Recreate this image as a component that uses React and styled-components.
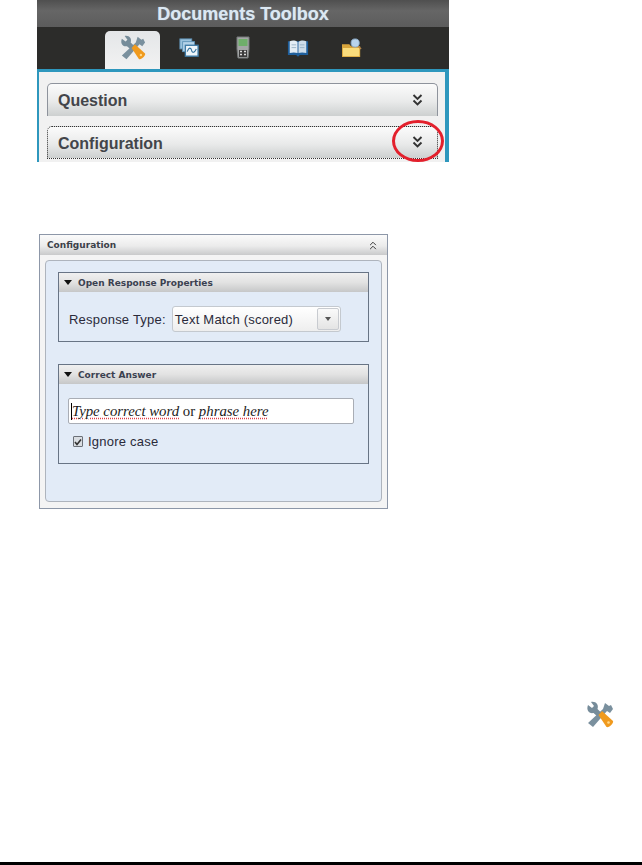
import React from "react";
import styled, { createGlobalStyle } from "styled-components";

const GlobalStyle = createGlobalStyle`
  html, body {
    margin: 0;
    padding: 0;
    background: #ffffff;
  }
  * {
    box-sizing: border-box;
  }
`;

const Page = styled.div`
  width: 642px;
  height: 865px;
  display: flex;
  flex-direction: column;
  font-family: "Liberation Sans", Arial, sans-serif;
  border-bottom: 3px solid #000000;
`;

// top screenshot
const Toolbox = styled.section`
  position: relative;
  width: 412px;
  height: 162px;
  margin-left: 37px;
  display: flex;
  flex-direction: column;
  overflow: hidden;
`;

const TitleBar = styled.div`
  height: 27px;
  flex: none;
  display: flex;
  align-items: center;
  justify-content: center;
  padding-top: 2px;
  background: linear-gradient(#4f4f4f, #666666 40%, #5c5c5c);
  color: #dce8f2;
  font-size: 18px;
  font-weight: bold;
  text-shadow: 0 0 1px #9fb8cc;
`;

const TabStrip = styled.div`
  height: 45px;
  flex: none;
  display: flex;
  align-items: flex-end;
  padding-left: 68px;
  background: #2c2c2a;
  border-bottom: 3px solid #2e97bd;
`;

const Tab = styled.div`
  width: ${(p) => p.$width || 45}px;
  height: 38px;
  display: flex;
  align-items: center;
  justify-content: center;
  padding-bottom: 4px;
  border-radius: 5px 5px 0 0;
  background: ${(p) => (p.$active ? "linear-gradient(#e4e6e8, #f2f2f2)" : "transparent")};
`;

const ToolboxBody = styled.div`
  flex: 1;
  display: flex;
  flex-direction: column;
  gap: 10px;
  padding: 11px 7px 0 8px;
  background: #f1f1f1;
  border-left: 2px solid #2e97bd;
  border-right: 4px solid #2e97bd;
`;

const Accordion = styled.div`
  height: 33px;
  flex: none;
  display: flex;
  align-items: center;
  justify-content: space-between;
  padding: 2px 14px 0 10px;
  border: 1px ${(p) => (p.$focused ? "dotted #333333" : "solid #8e939c")};
  border-bottom: ${(p) => (p.$focused ? "1px dotted #333333" : "none")};
  border-radius: 5px 5px 0 0;
  background: linear-gradient(#fbfbfb, #e9eaea 55%, #cdd0d0);
  color: #43454a;
  font-size: 16px;
  font-weight: bold;
`;

const ChevronSlot = styled.span`
  display: flex;
  margin-bottom: 3px;
`;

const Annotation = styled.div`
  position: absolute;
  left: 355px;
  top: 120px;
  width: 52px;
  height: 42px;
  border: 3px solid #e3202c;
  border-radius: 50%;
`;

// configuration dialog
const Dialog = styled.section`
  width: 349px;
  height: 275px;
  margin: 72px 0 0 39px;
  display: flex;
  flex-direction: column;
  border: 1px solid #8d97a8;
  background: #f4f4f4;
`;

const DialogHeader = styled.div`
  height: 20px;
  flex: none;
  display: flex;
  align-items: center;
  justify-content: space-between;
  padding: 0 10px 0 7px;
  background: linear-gradient(#fbfbfb, #ebebeb 55%, #c9cacb);
  color: #3c4048;
  font-family: "DejaVu Sans", sans-serif;
  font-size: 9px;
  font-weight: bold;
`;

const DialogBody = styled.div`
  flex: 1;
  display: flex;
  flex-direction: column;
  gap: 22px;
  margin: 5px 5px 6px 5px;
  padding: 11px 12px 0 12px;
  border: 1px solid #aeb4bd;
  border-radius: 4px;
  background: #e2ebf7;
`;

const Group = styled.div`
  height: ${(p) => p.$height}px;
  flex: none;
  display: flex;
  flex-direction: column;
  border: 1px solid #687485;
`;

const GroupHeader = styled.div`
  height: 19px;
  flex: none;
  display: flex;
  align-items: center;
  gap: 6px;
  padding-left: 5px;
  background: linear-gradient(#f0f0f0, #e2e2e2 50%, #c6c7c8);
  color: #3b4150;
  font-family: "DejaVu Sans", sans-serif;
  font-size: 9px;
  font-weight: bold;
`;

const Triangle = styled.span`
  width: 0;
  height: 0;
  border-left: 4.5px solid transparent;
  border-right: 4.5px solid transparent;
  border-top: 5px solid #111111;
`;

const FieldRow = styled.div`
  display: flex;
  align-items: center;
  gap: 6px;
  padding: 14px 0 0 10px;
  color: #2a2a3a;
  font-size: 13px;
  letter-spacing: 0.22px;
`;

const Select = styled.div`
  width: 169px;
  height: 26px;
  display: flex;
  align-items: center;
  justify-content: space-between;
  padding: 0 1px 0 2px;
  border: 1px solid #c4c9cf;
  border-radius: 3px;
  background: linear-gradient(#ffffff, #eeeeee);
`;

const SelectArrow = styled.span`
  width: 22px;
  height: 22px;
  display: flex;
  align-items: center;
  justify-content: center;
  border: 1px solid #c8cbd0;
  border-radius: 2px;
  background: linear-gradient(#fafafa, #e4e4e4);

  &::after {
    content: "";
    border-left: 3.5px solid transparent;
    border-right: 3.5px solid transparent;
    border-top: 4px solid #555555;
  }
`;

const AnswerInput = styled.div`
  width: 286px;
  height: 26px;
  margin: 14px 0 0 9px;
  display: flex;
  align-items: center;
  padding-left: 2px;
  border: 1px solid #a9adb5;
  border-radius: 2px;
  background: #ffffff;
  color: #1c1c1c;
  font-family: "Liberation Serif", "Times New Roman", serif;
  font-size: 14.8px;
  white-space: pre;
`;

const Caret = styled.span`
  width: 1px;
  height: 17px;
  background: #000000;
`;

const Misspelled = styled.em`
  text-decoration: underline dotted #e0404a;
  text-underline-offset: 2px;
`;

const CheckRow = styled.label`
  display: flex;
  align-items: center;
  gap: 5px;
  margin: 10px 0 0 14px;
  color: #2a2a3a;
  font-size: 13px;
  letter-spacing: 0.22px;
`;

const CheckBox = styled.span`
  width: 10px;
  height: 11px;
  display: flex;
  align-items: center;
  justify-content: center;
  border: 1px solid #6b7078;
  border-radius: 1px;
  background: #d9dde2;
`;

const IconRow = styled.div`
  display: flex;
  justify-content: flex-end;
  margin-top: 192px;
  padding-right: 28px;
`;

function ToolsIcon({ size = 28 }) {
  return (
    <svg width={size} height={size} viewBox="0 0 28 28">
      <path d="M19 2 L23 5 L25 4 L27 8 L24 12 L21 10 L7 26 L2 22 L17 8 Z" fill="#7a909e" />
      <path d="M2 4 L6 7 L8 5 L5 1 C10 0 13 4 11.500 8 L15 11.500 L11 15 L7.500 12 C3 13 0 9 2 4 Z" fill="#768c9a" />
      <path d="M12.500 14 L16 10 L27 20 C28 22 23 27 20.500 26 Z" fill="#f09a1e" />
      <circle cx="22.500" cy="21.500" r="1.300" fill="#ffd98a" />
    </svg>
  );
}

function PlotsIcon() {
  return (
    <svg width="20" height="20" viewBox="0 0 22 22">
      <rect x="1" y="1" width="13" height="11" fill="#9cc3dd" stroke="#5f93b8" />
      <rect x="4" y="4" width="13" height="11" fill="#b5d3e8" stroke="#5f93b8" />
      <rect x="7" y="8" width="14" height="12" fill="#eef6fb" stroke="#3f7ba6" strokeWidth="1.500" />
      <path d="M9 15 C11 10 13 10 14 14 C15 17 17 16 19 12" fill="none" stroke="#2f6f9c" strokeWidth="1.200" />
    </svg>
  );
}

function HandheldIcon() {
  return (
    <svg width="16" height="24" viewBox="0 0 16 24">
      <path d="M2 1 H14 V13 L13 22 H3 L2 13 Z" fill="#a4a6a6" stroke="#777a7a" />
      <rect x="3.500" y="3" width="9" height="7" fill="#6fae6a" />
      <rect x="4" y="14" width="8" height="7" fill="#3c3c3c" />
      <path d="M5 15.500 H7 M9 15.500 H11 M5 18.500 H7 M9 18.500 H11" stroke="#dddddd" strokeWidth="1.500" />
    </svg>
  );
}

function BookIcon() {
  return (
    <svg width="22" height="19" viewBox="0 0 24 20">
      <path d="M1 2 H23 V17 H14 L12 19 L10 17 H1 Z" fill="#1f5f9c" />
      <path d="M3 2 C6 1 9 1 11.500 3 V15 C9 14 6 14 3 15 Z" fill="#e4edf5" />
      <path d="M21 2 C18 1 15 1 12.500 3 V15 C15 14 18 14 21 15 Z" fill="#cfdde9" />
      <path d="M5 6 H10 M5 9 H10 M14 6 H19 M14 9 H19" stroke="#9ab2c6" />
    </svg>
  );
}

function FolderIcon() {
  return (
    <svg width="22" height="20" viewBox="0 0 24 22">
      <path d="M1 7 H9 L11 9 H21 V21 H1 Z" fill="#d9a53c" />
      <path d="M2 11 H20 V20 H2 Z" fill="#f9dc7c" />
      <circle cx="15.500" cy="5.500" r="4.500" fill="#b8d4ee" stroke="#8daecb" />
      <path d="M19 9 L22 12" stroke="#b5854a" strokeWidth="1.500" />
    </svg>
  );
}

function DoubleChevron({ up, size = 11 }) {
  return (
    <svg width={size} height={size + 1} viewBox="0 0 11 12">
      <g
        fill="none"
        stroke="#333333"
        strokeWidth={up ? "1.300" : "1.900"}
        transform={up ? "rotate(180 5.500 6)" : undefined}
      >
        <path d="M1.500 1 L5.500 5 L9.500 1" />
        <path d="M1.500 6.500 L5.500 10.500 L9.500 6.500" />
      </g>
    </svg>
  );
}

function Check() {
  return (
    <svg width="8" height="8" viewBox="0 0 8 8">
      <path d="M1 4 L3 6.500 L7 1.500" fill="none" stroke="#333333" strokeWidth="1.600" />
    </svg>
  );
}

export default function App() {
  return (
    <Page>
      <GlobalStyle />
      <Toolbox>
        <TitleBar>Documents Toolbox</TitleBar>
        <TabStrip>
          <Tab $active $width={55}>
            <ToolsIcon size={26} />
          </Tab>
          <Tab $width={58}>
            <PlotsIcon />
          </Tab>
          <Tab $width={50}>
            <HandheldIcon />
          </Tab>
          <Tab $width={60}>
            <BookIcon />
          </Tab>
          <Tab $width={48}>
            <FolderIcon />
          </Tab>
        </TabStrip>
        <ToolboxBody>
          <Accordion>
            Question
            <ChevronSlot>
              <DoubleChevron />
            </ChevronSlot>
          </Accordion>
          <Accordion $focused>
            Configuration
            <ChevronSlot>
              <DoubleChevron />
            </ChevronSlot>
          </Accordion>
        </ToolboxBody>
        <Annotation />
      </Toolbox>

      <Dialog>
        <DialogHeader>
          Configuration
          <DoubleChevron up size={8} />
        </DialogHeader>
        <DialogBody>
          <Group $height={70}>
            <GroupHeader>
              <Triangle />
              Open Response Properties
            </GroupHeader>
            <FieldRow>
              Response Type:
              <Select>
                Text Match (scored)
                <SelectArrow />
              </Select>
            </FieldRow>
          </Group>
          <Group $height={100}>
            <GroupHeader>
              <Triangle />
              Correct Answer
            </GroupHeader>
            <AnswerInput>
              <Caret />
              <Misspelled>Type correct word</Misspelled> or <Misspelled>phrase here</Misspelled>
            </AnswerInput>
            <CheckRow>
              <CheckBox>
                <Check />
              </CheckBox>
              Ignore case
            </CheckRow>
          </Group>
        </DialogBody>
      </Dialog>

      <IconRow>
        <ToolsIcon />
      </IconRow>
    </Page>
  );
}
